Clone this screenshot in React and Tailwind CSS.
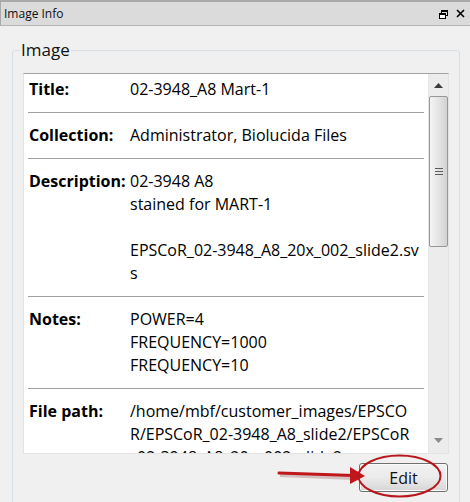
import React from "react";

const rows = [
  { label: "Title:", lines: ["02-3948_A8 Mart-1"], first: true },
  { label: "Collection:", lines: ["Administrator, Biolucida Files"] },
  {
    label: "Description:",
    lines: ["02-3948 A8", "stained for MART-1", "\u00a0", "EPSCoR_02-3948_A8_20x_002_slide2.sv", "s"],
  },
  { label: "Notes:", lines: ["POWER=4", "FREQUENCY=1000", "FREQUENCY=10"] },
  {
    label: "File path:",
    lines: [
      "/home/mbf/customer_images/EPSCO",
      "R/EPSCoR_02-3948_A8_slide2/EPSCoR",
      "_02-3948_A8_20x_002_slide2.svs",
    ],
    last: true,
  },
];

export default function App() {
  return (
    <div className="relative w-[470px] h-[502px] overflow-hidden bg-[#f0f0f0] font-['Segoe_UI','Open_Sans','Noto_Sans',sans-serif] text-black">
      {/* Title bar */}
      <div className="h-[26px] border-t-[2px] border-t-[#a9a9a9] border-b border-b-[#b4b4b4] border-l border-l-[#a9a9a9] bg-[#dbdbdb] flex items-center pl-[3px] pr-[5px]">
        <span className="text-[12px] leading-none text-[#111] mt-[1px]">Image Info</span>
        <div className="ml-auto flex items-center gap-[8px]">
          <svg width="9" height="9" viewBox="0 0 9 9" className="mt-[1px]">
            <rect x="2.5" y="0.5" width="6" height="5" fill="none" stroke="#000" strokeWidth="1" />
            <rect x="2" y="0" width="7" height="2" fill="#000" />
            <rect x="0.5" y="3.5" width="6" height="5" fill="#fff" stroke="#000" strokeWidth="1" />
            <rect x="0" y="3" width="7" height="2" fill="#000" />
          </svg>
          <svg width="9" height="9" viewBox="0 0 9 9">
            <path d="M1 1 L8 8 M8 1 L1 8" stroke="#000" strokeWidth="1.6" />
          </svg>
        </div>
      </div>

      {/* Group box */}
      <fieldset className="mt-[14px] ml-[12px] w-[448px] h-[480px] border border-[#d5dfe5] rounded-[3px] p-0">
        <legend className="ml-[7px] px-[1px] text-[17px] leading-[20px] text-[#111]">Image</legend>
        <div className="px-[10px] pt-[13px]">
          {/* Scroll area */}
          <div className="h-[381px] bg-white border border-[#e3e3e3] border-t-[#a3a3a3] flex overflow-hidden">
            <div className="flex-1 overflow-hidden px-[4px]">
              {rows.map((r, i) => (
                <div
                  key={i}
                  className={`flex pl-[1px] text-[16px] leading-[23px] ${r.first ? "pt-[4px]" : "pt-[11px]"} ${r.last ? "" : "pb-[11px] border-b border-[#a0a0a0]"}`}
                >
                  <div className="w-[101px] shrink-0 font-bold">{r.label}</div>
                  <div className="whitespace-nowrap">
                    {r.lines.map((l, j) => (
                      <div key={j}>{l}</div>
                    ))}
                  </div>
                </div>
              ))}
            </div>
            {/* Scrollbar */}
            <div className="w-[20px] shrink-0 bg-[#ececec] border-l border-[#e6e6e6] flex flex-col items-center">
              <div className="h-[22px] w-full flex items-center justify-center">
                <svg width="9" height="5" viewBox="0 0 9 5">
                  <path d="M0 5 L4.5 0 L9 5 Z" fill="#3c3c3c" />
                </svg>
              </div>
              <div className="w-[19px] h-[151px] rounded-[2px] border border-[#979797] bg-gradient-to-r from-[#f4f4f4] via-[#e4e4e4] to-[#d2d2d2] flex items-center justify-center">
                <div className="flex flex-col gap-[2px]">
                  <div className="w-[8px] h-[1px] bg-[#5a5a5a]" />
                  <div className="w-[8px] h-[1px] bg-[#5a5a5a]" />
                  <div className="w-[8px] h-[1px] bg-[#5a5a5a]" />
                </div>
              </div>
              <div className="flex-1" />
              <div className="h-[22px] w-full flex items-center justify-center pb-[4px]">
                <svg width="9" height="5" viewBox="0 0 9 5">
                  <path d="M0 0 L4.5 5 L9 0 Z" fill="#8a8a8a" />
                </svg>
              </div>
            </div>
          </div>

          {/* Button row */}
          <div className="flex justify-end mt-[9px] pr-[1px]">
            <button className="w-[89px] h-[29px] rounded-[3px] border border-[#707070] bg-gradient-to-b from-[#f2f2f2] via-[#ebebeb] to-[#d6d6d6] text-[16px] leading-none text-[#111] shadow-[inset_0_0_0_1px_#fcfcfc]">
              Edit
            </button>
          </div>
        </div>
      </fieldset>

      {/* Annotation overlay */}
      <svg className="absolute left-0 top-0 pointer-events-none" width="470" height="502" viewBox="0 0 470 502">
        <line x1="279" y1="473" x2="352" y2="476" stroke="#7a2a2a" strokeOpacity="0.25" strokeWidth="4" transform="translate(1 2)" />
        <line x1="279" y1="473" x2="354" y2="475.5" stroke="#c0171d" strokeWidth="3" strokeLinecap="round" />
        <path d="M350 467 L365 476 L350 484 Z" fill="#c0171d" />
        <ellipse cx="399.5" cy="476" rx="41" ry="20.5" fill="none" stroke="#b8161c" strokeWidth="2" />
      </svg>
    </div>
  );
}
